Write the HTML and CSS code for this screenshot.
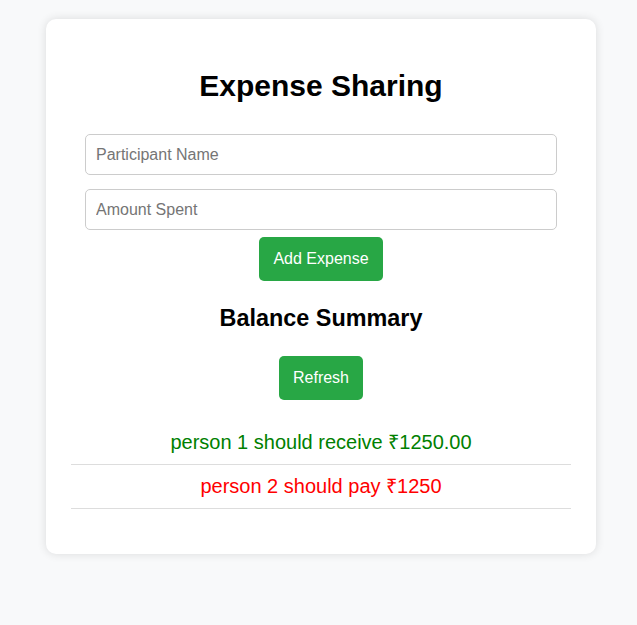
FILE: index.html
```html
<!DOCTYPE html>
<html>
<head>
<meta charset="utf-8">
<link rel="stylesheet" href="styles.css">
</head>
<body>
<div class="card">
  <h1 class="title">Expense Sharing</h1>
  <div class="form">
    <input class="field" type="text" placeholder="Participant Name">
    <input class="field" type="text" placeholder="Amount Spent">
    <button class="btn btn-add">Add Expense</button>
  </div>
  <h2 class="subtitle">Balance Summary</h2>
  <div class="actions">
    <button class="btn">Refresh</button>
  </div>
  <ul class="list">
    <li class="item receive">person 1 should receive ₹1250.00</li>
    <li class="item pay">person 2 should pay ₹1250</li>
  </ul>
</div>
</body>
</html>
```
FILE: styles.css
```css
html, body {
  margin: 0;
  padding: 0;
}
body {
  background: #f8f9fa;
  font-family: "Liberation Sans", Arial, sans-serif;
  padding-top: 19px;
  padding-bottom: 20px;
}
.card {
  box-sizing: border-box;
  width: 550px;
  margin: 0 0 0 46px;
  background: #fff;
  border-radius: 10px;
  padding: 25px;
  box-shadow: 0 0 10px rgba(0, 0, 0, 0.12);
  text-align: center;
}
.title {
  font-size: 30px;
  font-weight: bold;
  margin: 25px 0 31px;
  color: #000;
}
.form {
  display: flex;
  flex-direction: column;
  align-items: center;
  gap: 14px;
}
.field {
  width: 90%;
  height: 19px;
  box-sizing: content-box;
  padding: 10px;
  font-size: 16px;
  font-family: "Liberation Sans", Arial, sans-serif;
  border: 1px solid #ccc;
  border-radius: 5px;
  outline: none;
  color: #333;
}
.field::placeholder {
  color: #757575;
}
.btn {
  background: #28a745;
  color: #fff;
  border: none;
  border-radius: 5px;
  padding: 13px 14px;
  font-size: 16px;
  font-family: "Liberation Sans", Arial, sans-serif;
  line-height: 18px;
  cursor: pointer;
}
.btn-add {
  margin-top: -7px;
}
.subtitle {
  font-size: 23.4px;
  font-weight: bold;
  margin: 24px 0 24px;
}
.actions {
  display: flex;
  justify-content: center;
}
.list {
  list-style: none;
  padding: 0;
  margin: 21px 0 20px;
}
.item {
  font-size: 20px;
  padding: 10px;
  line-height: 23px;
  border-bottom: 1px solid #ddd;
}
.receive { color: #008000; }
.pay { color: #ff0000; }
```
